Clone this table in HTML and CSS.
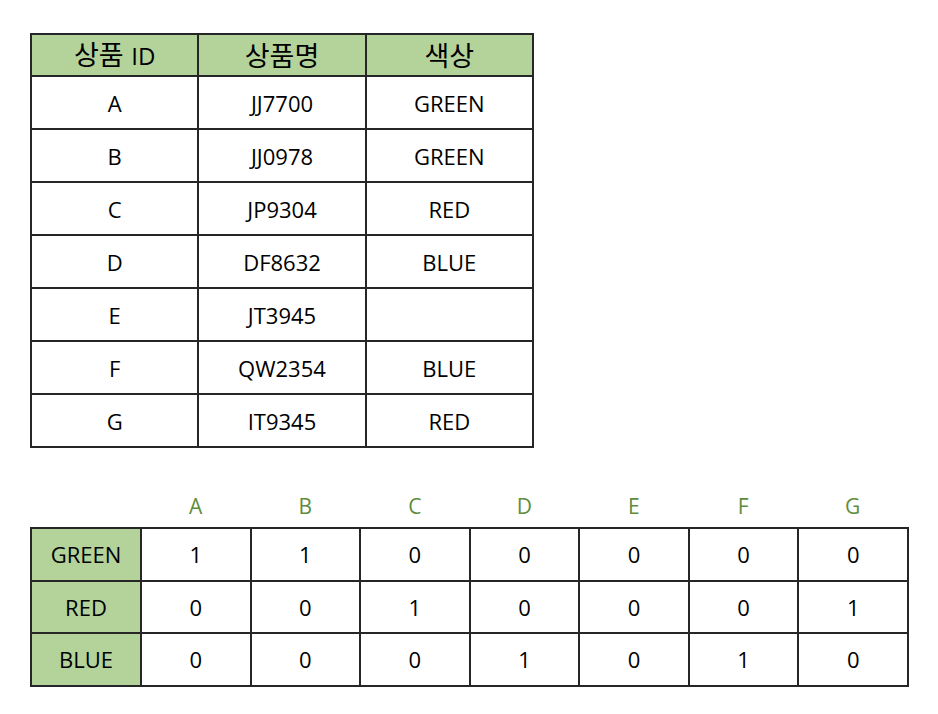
FILE: index.html
```html
<!DOCTYPE html>
<html lang="ko">
<head>
<meta charset="utf-8">
<link rel="stylesheet" href="styles.css">
</head>
<body>
<div class="page">
  <table class="products">
    <thead>
      <tr><th>상품 <span class="latin">ID</span></th><th>상품명</th><th>색상</th></tr>
    </thead>
    <tbody>
      <tr><td>A</td><td>JJ7700</td><td>GREEN</td></tr>
      <tr><td>B</td><td>JJ0978</td><td>GREEN</td></tr>
      <tr><td>C</td><td>JP9304</td><td>RED</td></tr>
      <tr><td>D</td><td>DF8632</td><td>BLUE</td></tr>
      <tr><td>E</td><td>JT3945</td><td></td></tr>
      <tr><td>F</td><td>QW2354</td><td>BLUE</td></tr>
      <tr><td>G</td><td>IT9345</td><td>RED</td></tr>
    </tbody>
  </table>

  <div class="matrix-wrap">
    <div class="letters">
      <span></span><span>A</span><span>B</span><span>C</span><span>D</span><span>E</span><span>F</span><span>G</span>
    </div>
    <table class="matrix">
      <tbody>
        <tr><th>GREEN</th><td>1</td><td>1</td><td>0</td><td>0</td><td>0</td><td>0</td><td>0</td></tr>
        <tr><th>RED</th><td>0</td><td>0</td><td>1</td><td>0</td><td>0</td><td>0</td><td>1</td></tr>
        <tr><th>BLUE</th><td>0</td><td>0</td><td>0</td><td>1</td><td>0</td><td>1</td><td>0</td></tr>
      </tbody>
    </table>
  </div>
</div>
</body>
</html>
```
FILE: styles.css
```css
html, body {
  margin: 0;
  padding: 0;
  background: #ffffff;
}
body {
  font-family: "Open Sans", "Noto Sans CJK KR", sans-serif;
  color: #000;
}
.page {
  padding: 33px 0 0 30px;
}
table {
  border-collapse: collapse;
  table-layout: fixed;
}
.products th,
.products td,
.matrix th,
.matrix td {
  border: 2px solid #262626;
  text-align: center;
  vertical-align: middle;
  padding: 0;
  font-size: 22px;
  line-height: 26px;
  font-weight: 400;
}
.products {
  width: 504px;
}
.products th {
  height: 40px;
  background: #b3d39b;
  font-size: 27px;
  line-height: 30px;
  font-family: "Noto Sans CJK KR", "Open Sans", sans-serif;
}
.products th .latin {
  font-family: "Open Sans", sans-serif;
  font-size: 24px;
}
.products td {
  height: 51px;
}
.matrix-wrap {
  margin-top: 35px;
}
.letters {
  display: grid;
  grid-template-columns: 111px repeat(7, 109.5px);
  height: 44px;
  align-items: center;
}
.letters span {
  text-align: center;
  color: #5e8c3c;
  font-size: 21px;
  line-height: 26px;
  padding-top: 2px;
}
.matrix {
  width: 879px;
}
.matrix th {
  width: 108px;
  background: #b3d39b;
  height: 50.6px;
}
.matrix td {
  height: 50.6px;
}
```
